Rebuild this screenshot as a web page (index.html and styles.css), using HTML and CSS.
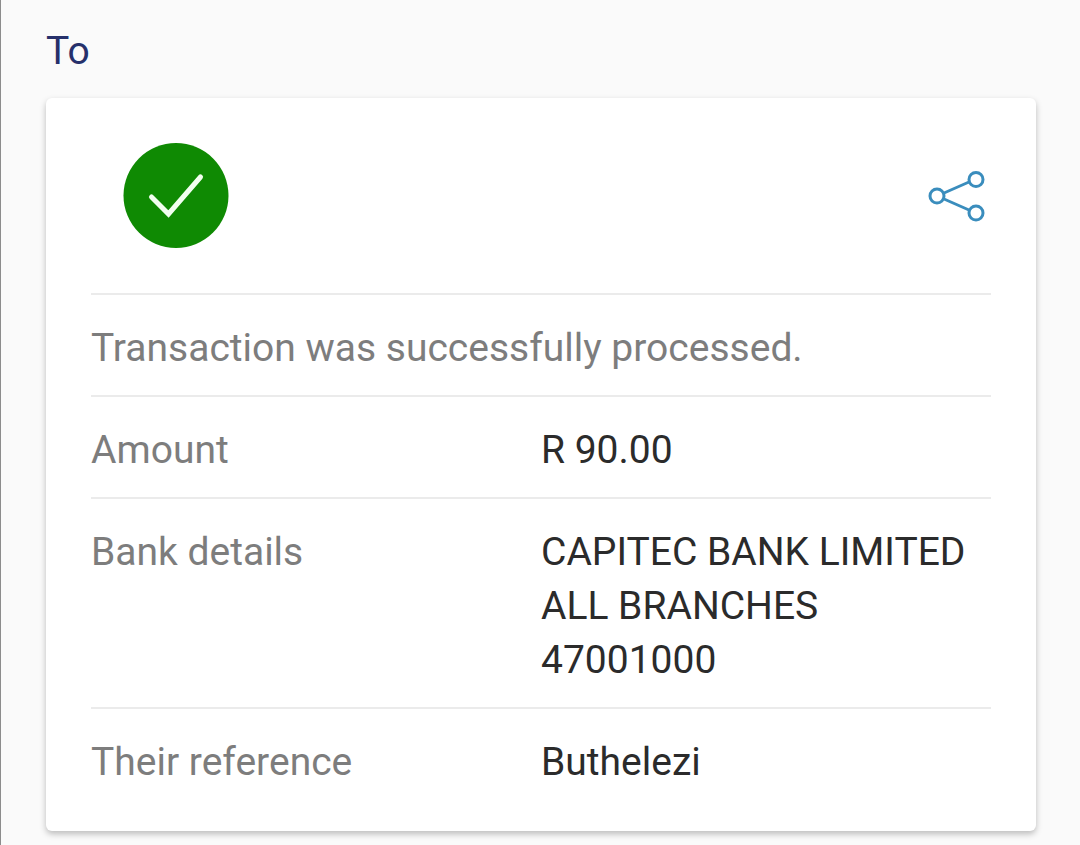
FILE: index.html
```html
<!DOCTYPE html>
<html lang="en">
<head>
    <meta charset="UTF-8">
    <meta name="viewport" content="width=device-width, initial-scale=1.0">
    <title>Transaction details</title>
    <link rel="stylesheet" href="styles.css">
</head>
<body>
    <main class="page">
        <h1>To</h1>

        <section class="card">
            <!-- Status icon and share button -->
            <div class="card-header">
                <svg class="status-icon" viewBox="0 0 106 106" aria-hidden="true">
                    <circle cx="53" cy="52.5" r="52.5" fill="#0f8a03"/>
                    <path d="M28.5 54 L45.5 71 L77.5 34" fill="none" stroke="#f2fff0" stroke-width="5" stroke-linecap="round" stroke-linejoin="miter"/>
                </svg>
                <button type="button" class="share" aria-label="Share">
                    <svg viewBox="0 0 60 54" aria-hidden="true">
                        <g fill="none" stroke="#3a8dbd" stroke-width="3">
                            <path d="M17 24 L42 13 M17 30 L42 41"/>
                            <circle cx="10" cy="27" r="7"/>
                            <circle cx="49" cy="10.5" r="7"/>
                            <circle cx="49" cy="44" r="7"/>
                        </g>
                    </svg>
                </button>
            </div>

            <p class="message">Transaction was successfully processed.</p>

            <dl class="details">
                <div class="row">
                    <dt>Amount</dt>
                    <dd>R 90.00</dd>
                </div>
                <div class="row">
                    <dt>Bank details</dt>
                    <dd>CAPITEC BANK LIMITED<br>ALL BRANCHES<br>47001000</dd>
                </div>
                <div class="row">
                    <dt>Their reference</dt>
                    <dd>Buthelezi</dd>
                </div>
            </dl>
        </section>
    </main>
</body>
</html>
```

FILE: styles.css
```css
* {
    box-sizing: border-box;
}

body {
    margin: 0;
    background-color: #fafafa;
    color: #2b2b2b;
    font-family: Roboto, sans-serif;
    font-size: 39px;
    line-height: 54px;
}

.page {
    min-height: 100vh;
    padding: 24px 44px 13px 45px;
    border-left: 1px solid #8c8c8c;
}

h1 {
    margin: 0 0 20px;
    color: #26306b;
    font-size: 39px;
    font-weight: 400;
    line-height: 54px;
}

.card {
    padding: 0 45px 22px;
    background-color: #fff;
    border-radius: 6px;
    box-shadow: 0 3px 6px rgba(0, 0, 0, 0.25);
}

.card-header {
    display: flex;
    align-items: center;
    justify-content: space-between;
    height: 195px;
    padding-left: 32px;
}

.status-icon {
    width: 106px;
    height: 106px;
}

.share {
    width: 60px;
    height: 54px;
    margin-right: 4px;
    padding: 0;
    background: none;
    border: none;
    cursor: pointer;
}

.share svg {
    display: block;
    width: 60px;
    height: 54px;
}

.message,
.row {
    margin: 0;
    padding: 26px 0 20px;
    border-top: 2px solid #ebebeb;
}

.message,
dt {
    color: #7d7d7d;
}

.details {
    margin: 0;
}

.row {
    display: grid;
    grid-template-columns: 1fr 1fr;
}

dd {
    margin: 0;
    white-space: nowrap;
}
```
